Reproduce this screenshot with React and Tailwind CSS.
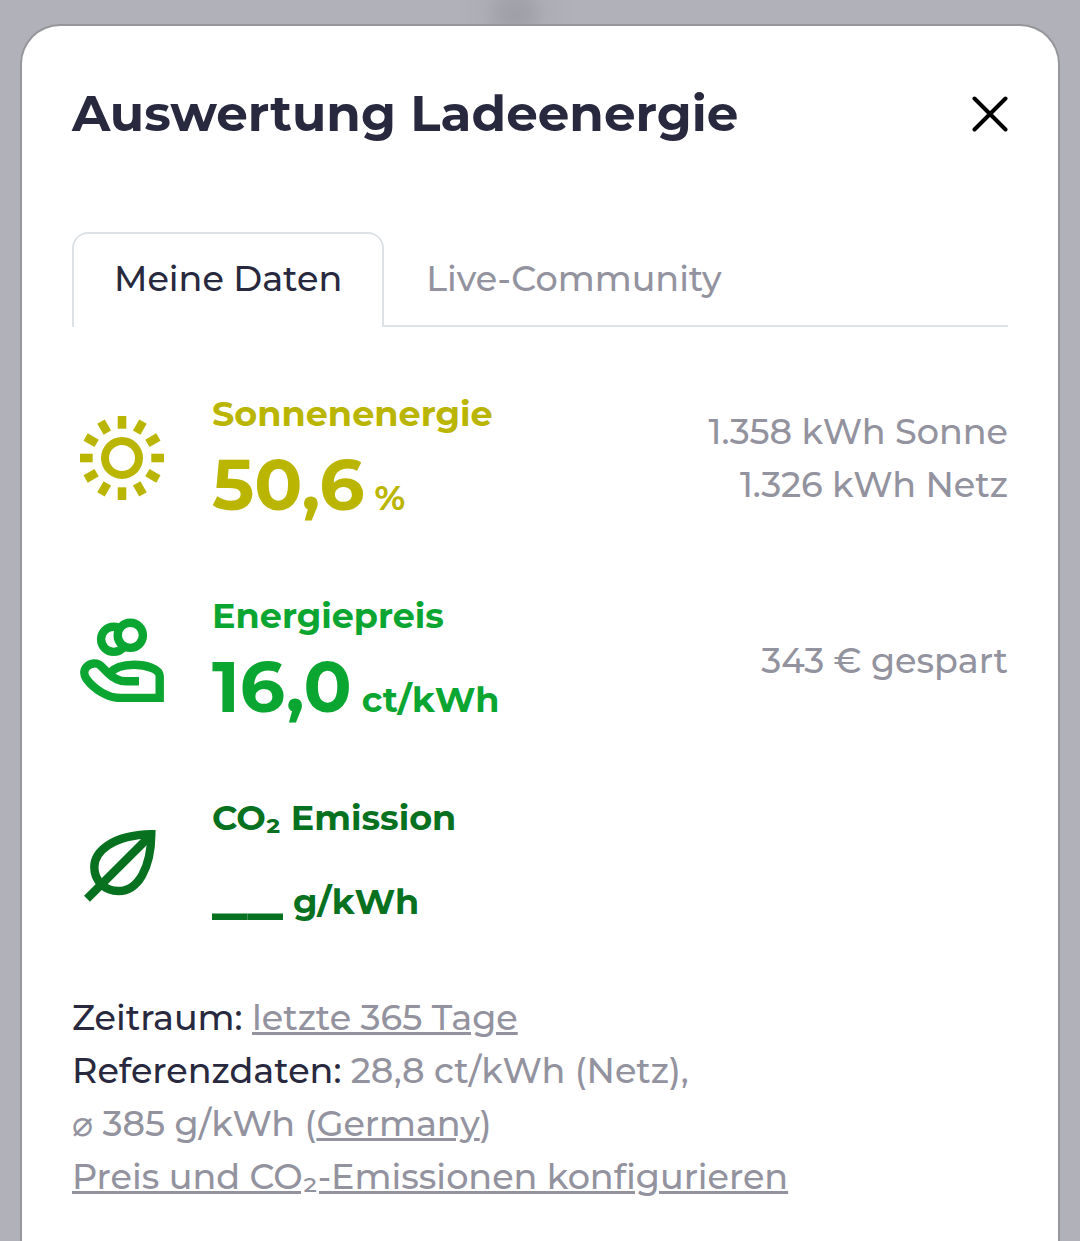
import React from "react";

const RAYS = [0, 30, 60, 90, 120, 150, 180, 210, 240, 270, 300, 330];

const SunIcon = () => (
  <svg viewBox="0 0 84 84" className="w-full" fill="none" stroke="currentColor" aria-hidden="true">
    <circle cx="42" cy="42" r="17" strokeWidth="8" />
    {RAYS.map((angle) => (
      <path key={angle} d="M42 0v12.7" strokeWidth="8.6" transform={`rotate(${angle} 42 42)`} />
    ))}
  </svg>
);

const CoinHandIcon = () => (
  <svg viewBox="0 0 84 84" className="w-full" fill="none" stroke="currentColor" strokeWidth="8.4" aria-hidden="true">
    <circle cx="33.7" cy="21.3" r="12.6" />
    <circle cx="50.3" cy="17.3" r="12.6" fill="white" />
    <path d="M59 63.3H46C38 63.3 33 60 28 55L21 48C17 44 10.5 45 7 48.5C3.5 52 3.5 57 6.5 61C14 71 27 80 41 80H79.7V58C79.7 51 66 46.7 54 46.7C43 46.7 34 50 29 55.5" />
  </svg>
);

const LeafIcon = () => (
  <svg viewBox="0 -4 84 84" className="w-full" fill="none" stroke="currentColor" strokeWidth="8.4" aria-hidden="true">
    <path d="M71.3 10.3C32 11 14.3 28 14.3 43C14.3 57 25 67 38.5 67C58 67 71 44 71.3 10.3Z" />
    <path d="M7 74.7L70 12" />
  </svg>
);

const STATS = [
  {
    label: "Sonnenenergie",
    value: "50,6",
    unit: "%",
    details: ["1.358 kWh Sonne", "1.326 kWh Netz"],
    color: "text-[#bab500]",
    icon: SunIcon,
  },
  {
    label: "Energiepreis",
    value: "16,0",
    unit: "ct/kWh",
    details: ["343 € gespart"],
    color: "text-[#0ba631]",
    icon: CoinHandIcon,
  },
  {
    label: "CO₂ Emission",
    value: "__",
    unit: "g/kWh",
    details: [],
    color: "text-[#07711f]",
    icon: LeafIcon,
  },
];

const StatRow = ({ label, value, unit, details, color, icon: Icon }) => (
  <div className="flex items-center gap-10">
    <div className={`w-[100px] shrink-0 p-2 ${color}`}>
      <Icon />
    </div>
    <div className={`font-bold ${color}`}>
      <div>{label}</div>
      <div className="flex items-baseline gap-2.5">
        <span className="text-[71px] leading-[89px]">{value}</span>
        <span>{unit}</span>
      </div>
    </div>
    <div className="ml-auto text-right text-[#93939f]">
      {details.map((line) => (
        <div key={line}>{line}</div>
      ))}
    </div>
  </div>
);

const App = () => {
  return (
    <div className="min-h-screen flex flex-col px-5 pt-6 bg-[#b1b1ba] bg-[radial-gradient(circle_at_515px_14px,#9f9fa8_0px,#a3a3ac_14px,#adadb6_32px,#b1b1ba_60px)] font-['Montserrat','Inter',sans-serif] text-[35px] leading-[53px] font-medium text-[#28293e]">
      <main role="dialog" aria-labelledby="title" className="flex-1 rounded-t-[40px] border-2 border-b-0 border-[#96969b] bg-white px-[50px] pt-[50px] pb-10">
        <header className="flex items-center justify-between">
          <h1 id="title" className="text-[50px] leading-[76px] font-bold">Auswertung Ladeenergie</h1>
          <button type="button" aria-label="Schließen" className="text-black">
            <svg viewBox="0 0 36 36" className="w-9" fill="none" stroke="currentColor" strokeWidth="4" strokeLinecap="round" aria-hidden="true">
              <path d="M2.5 2.5L33.5 33.5M33.5 2.5L2.5 33.5" />
            </svg>
          </button>
        </header>

        <div role="tablist" className="mt-20 flex">
          <button type="button" role="tab" aria-selected="true" className="rounded-t-2xl border-2 border-b-0 border-[#dee2e6] px-10 pt-[18px] pb-[22px]">
            Meine Daten
          </button>
          <button type="button" role="tab" aria-selected="false" className="flex-1 border-b-2 border-[#dee2e6] px-[42px] py-5 text-left text-[#93939f]">
            Live-Community
          </button>
        </div>

        <section className="mt-[60px] flex flex-col gap-[60px]">
          {STATS.map((stat) => (
            <StatRow key={stat.label} {...stat} />
          ))}
        </section>

        <section className="mt-[58px] text-[#93939f]">
          <p>
            <span className="text-[#28293e]">Zeitraum:</span>{" "}
            <a href="#zeitraum" className="underline">letzte 365 Tage</a>
          </p>
          <p>
            <span className="text-[#28293e]">Referenzdaten:</span> 28,8 ct/kWh (Netz),
            <br />
            ⌀ 385 g/kWh (<a href="#region" className="underline">Germany</a>)
          </p>
          <a href="#konfiguration" className="underline">Preis und CO₂-Emissionen konfigurieren</a>
        </section>
      </main>
    </div>
  );
};

export default App;
